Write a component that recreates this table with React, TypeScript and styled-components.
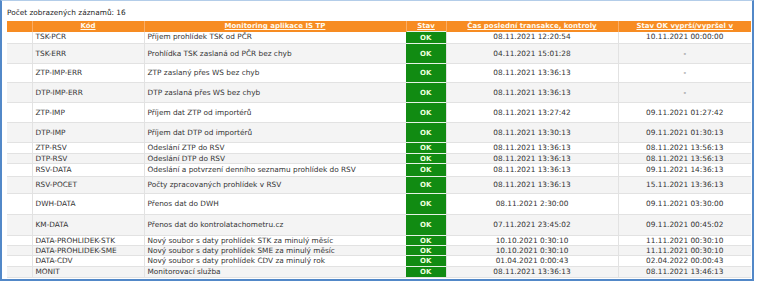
import React from "react";
import styled, { createGlobalStyle } from "styled-components";

const GlobalStyle = createGlobalStyle`
    html, body {
        margin: 0;
        padding: 0;
        background: #fff;
    }
`

const Frame = styled.div`
    box-sizing: border-box;
    width: 754px;
    height: 281px;
    border-left: 2px solid #5288c8;
    border-right: 2px solid #5288c8;
    border-top: 1px solid #b3cde9;
    border-bottom: 2px solid #5288c8;
    padding: 7px 0 0 5px;
    font-family: "DejaVu Sans", Verdana, sans-serif;
    font-size: 7.35px;
    color: #333;
    overflow: hidden;
`

const Count = styled.div`
    height: 9px;
    line-height: 9px;
    margin-bottom: 4px;
    color: #222;
`

const Table = styled.table`
    table-layout: fixed;
    border-collapse: collapse;
    width: 744px;
`

const HeadCell = styled.th`
    background: #f78c22;
    border-left: 1px solid #f9ad66;
    padding: 0;
    height: 10px;
    line-height: 8px;
    font-size: 7px;
    font-weight: bold;
    color: #fffaf0;
    text-align: center;
    text-decoration: underline;
    white-space: nowrap;
    &:first-child {
        border-left: none;
    }
`

const Row = styled.tr<{ $h: number; $odd: boolean }>`
    height: ${p => p.$h}px;
    background: ${p => (p.$odd ? "#f4f4f4" : "#fff")};
    border-bottom: 1px solid #e2e2e2;
`

const Cell = styled.td<{ $align?: string }>`
    padding: 0 3px;
    line-height: 8px;
    border-left: 1px solid #e2e2e2;
    text-align: ${p => p.$align || "left"};
    vertical-align: middle;
    white-space: nowrap;
    overflow: hidden;
    &:first-child {
        border-left: none;
    }
`

const StatusCell = styled.td`
    padding: 0;
    line-height: 8px;
    background: #118b12;
    border-top: 1px solid #e6f2e6;
    color: #eaffdf;
    font-size: 7px;
    font-weight: bold;
    text-align: center;
    vertical-align: middle;
`

const rows = [
    { code: "TSK-PCR", name: "Příjem prohlídek TSK od PČR", last: "08.11.2021 12:20:54", exp: "10.11.2021 00:00:00", h: 12 },
    { code: "TSK-ERR", name: "Prohlídka TSK zaslaná od PČR bez chyb", last: "04.11.2021 15:01:28", exp: "-", h: 20 },
    { code: "ZTP-IMP-ERR", name: "ZTP zaslaný přes WS bez chyb", last: "08.11.2021 13:36:13", exp: "-", h: 19 },
    { code: "DTP-IMP-ERR", name: "DTP zaslaná přes WS bez chyb", last: "08.11.2021 13:36:13", exp: "-", h: 20 },
    { code: "ZTP-IMP", name: "Příjem dat ZTP od importérů", last: "08.11.2021 13:27:42", exp: "09.11.2021 01:27:42", h: 20 },
    { code: "DTP-IMP", name: "Příjem dat DTP od importérů", last: "08.11.2021 13:30:13", exp: "09.11.2021 01:30:13", h: 20 },
    { code: "ZTP-RSV", name: "Odeslání ZTP do RSV", last: "08.11.2021 13:36:13", exp: "08.11.2021 13:56:13", h: 11 },
    { code: "DTP-RSV", name: "Odeslání DTP do RSV", last: "08.11.2021 13:36:13", exp: "08.11.2021 13:56:13", h: 10 },
    { code: "RSV-DATA", name: "Odeslání a potvrzení denního seznamu prohlídek do RSV", last: "08.11.2021 13:36:13", exp: "09.11.2021 14:36:13", h: 13 },
    { code: "RSV-POCET", name: "Počty zpracovaných prohlídek v RSV", last: "08.11.2021 13:36:13", exp: "15.11.2021 13:36:13", h: 17 },
    { code: "DWH-DATA", name: "Přenos dat do DWH", last: "08.11.2021 2:30:00", exp: "09.11.2021 03:30:00", h: 21 },
    { code: "KM-DATA", name: "Přenos dat do kontrolatachometru.cz", last: "07.11.2021 23:45:02", exp: "09.11.2021 00:45:02", h: 21 },
    { code: "DATA-PROHLIDEK-STK", name: "Nový soubor s daty prohlídek STK za minulý měsíc", last: "10.10.2021 0:30:10", exp: "11.11.2021 00:30:10", h: 10 },
    { code: "DATA-PROHLIDEK-SME", name: "Nový soubor s daty prohlídek SME za minulý měsíc", last: "10.10.2021 0:30:10", exp: "11.11.2021 00:30:10", h: 10 },
    { code: "DATA-CDV", name: "Nový soubor s daty prohlídek CDV za minulý rok", last: "01.04.2021 0:00:43", exp: "02.04.2022 00:00:43", h: 11 },
    { code: "MONIT", name: "Monitorovací služba", last: "08.11.2021 13:36:13", exp: "08.11.2021 13:46:13", h: 11 },
]

function App() {
    return (
        <>
            <GlobalStyle />
            <Frame>
                <Count>Počet zobrazených záznamů: 16</Count>
                <Table>
                    <colgroup>
                        <col style={{ width: 25 }} />
                        <col style={{ width: 112 }} />
                        <col style={{ width: 262 }} />
                        <col style={{ width: 40 }} />
                        <col style={{ width: 172 }} />
                        <col style={{ width: 133 }} />
                    </colgroup>
                    <thead>
                        <tr>
                            <HeadCell></HeadCell>
                            <HeadCell>Kód</HeadCell>
                            <HeadCell>Monitoring aplikace IS TP</HeadCell>
                            <HeadCell>Stav</HeadCell>
                            <HeadCell>Čas poslední transakce, kontroly</HeadCell>
                            <HeadCell>Stav OK vyprší/vypršel v</HeadCell>
                        </tr>
                    </thead>
                    <tbody>
                        {rows.map((r, i) => (
                            <Row key={r.code} $h={r.h} $odd={i % 2 === 1}>
                                <Cell></Cell>
                                <Cell>{r.code}</Cell>
                                <Cell>{r.name}</Cell>
                                <StatusCell>OK</StatusCell>
                                <Cell $align="center">{r.last}</Cell>
                                <Cell $align="center">{r.exp}</Cell>
                            </Row>
                        ))}
                    </tbody>
                </Table>
            </Frame>
        </>
    )
}

export default App;
